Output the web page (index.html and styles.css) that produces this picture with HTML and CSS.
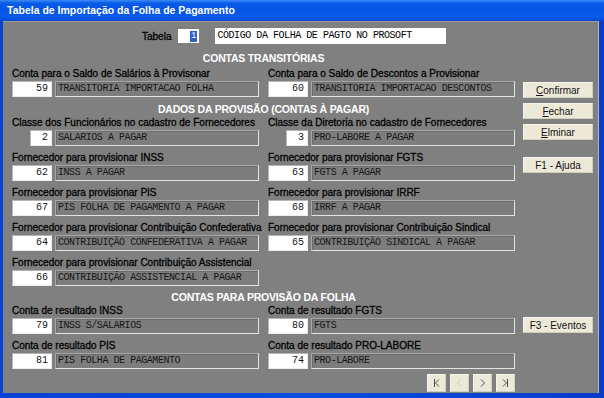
FILE: index.html
```html
<!DOCTYPE html>
<html>
<head>
  <title>Tabela de Importação da Folha de Pagamento</title>
  <link rel="stylesheet" href="styles.css">
</head>
<body>
  <div class="window">
    <div class="titlebar">Tabela de Importação da Folha de Pagamento</div>
    <div class="frame">
      <div class="client">
        <div class="form">
          <div class="tabela-row">
            <label class="tabela-label">Tabela</label>
            <span class="code-box"><span class="selected">1</span></span>
            <span class="desc-box">CÓDIGO DA FOLHA DE PAGTO NO PROSOFT</span>
          </div>

          <div class="section-title first">CONTAS TRANSITÓRIAS</div>
          <div class="grid grid-first">
            <div class="group">
              <label>Conta para o Saldo de Salários à Provisonar</label>
              <div class="field-row">
                <span class="num">59</span>
                <span class="text">TRANSITORIA IMPORTACAO FOLHA</span>
              </div>
            </div>
            <div class="group">
              <label>Conta para o Saldo de Descontos a Provisionar</label>
              <div class="field-row">
                <span class="num">60</span>
                <span class="text">TRANSITORIA IMPORTACAO DESCONTOS</span>
              </div>
            </div>
          </div>

          <div class="section-title">DADOS DA PROVISÃO (CONTAS À PAGAR)</div>
          <div class="grid">
            <div class="group">
              <label>Classe dos Funcionários no cadastro de Fornecedores</label>
              <div class="field-row">
                <span class="num short">2</span>
                <span class="text">SALARIOS A PAGAR</span>
              </div>
            </div>
            <div class="group">
              <label>Classe da Diretoria no cadastro de Fornecedores</label>
              <div class="field-row">
                <span class="num short">3</span>
                <span class="text">PRO-LABORE A PAGAR</span>
              </div>
            </div>
            <div class="group">
              <label>Fornecedor para provisionar INSS</label>
              <div class="field-row">
                <span class="num">62</span>
                <span class="text">INSS A PAGAR</span>
              </div>
            </div>
            <div class="group">
              <label>Fornecedor para provisionar FGTS</label>
              <div class="field-row">
                <span class="num">63</span>
                <span class="text">FGTS A PAGAR</span>
              </div>
            </div>
            <div class="group">
              <label>Fornecedor para provisionar PIS</label>
              <div class="field-row">
                <span class="num">67</span>
                <span class="text">PIS FOLHA DE PAGAMENTO A PAGAR</span>
              </div>
            </div>
            <div class="group">
              <label>Fornecedor para provisionar IRRF</label>
              <div class="field-row">
                <span class="num">68</span>
                <span class="text">IRRF A PAGAR</span>
              </div>
            </div>
            <div class="group">
              <label>Fornecedor para provisionar Contribuição Confederativa</label>
              <div class="field-row">
                <span class="num">64</span>
                <span class="text">CONTRIBUIÇÃO CONFEDERATIVA A PAGAR</span>
              </div>
            </div>
            <div class="group">
              <label>Fornecedor para provisionar Contribuição Sindical</label>
              <div class="field-row">
                <span class="num">65</span>
                <span class="text">CONTRIBUIÇÃO SINDICAL A PAGAR</span>
              </div>
            </div>
            <div class="group">
              <label>Fornecedor para provisionar Contribuição Assistencial</label>
              <div class="field-row">
                <span class="num">66</span>
                <span class="text">CONTRIBUIÇÃO ASSISTENCIAL A PAGAR</span>
              </div>
            </div>
          </div>

          <div class="section-title last">CONTAS PARA PROVISÃO DA FOLHA</div>
          <div class="grid">
            <div class="group">
              <label>Conta de resultado INSS</label>
              <div class="field-row">
                <span class="num">79</span>
                <span class="text">INSS S/SALARIOS</span>
              </div>
            </div>
            <div class="group">
              <label>Conta de resultado FGTS</label>
              <div class="field-row">
                <span class="num">80</span>
                <span class="text">FGTS</span>
              </div>
            </div>
            <div class="group">
              <label>Conta de resultado PIS</label>
              <div class="field-row">
                <span class="num">81</span>
                <span class="text">PIS FOLHA DE PAGAMENTO</span>
              </div>
            </div>
            <div class="group">
              <label>Conta de resultado PRO-LABORE</label>
              <div class="field-row">
                <span class="num">74</span>
                <span class="text">PRO-LABORE</span>
              </div>
            </div>
          </div>

          <div class="nav">
            <button class="nav-btn">
              <svg width="7" height="8" viewBox="0 0 7 8"><path d="M1.5 0v8M6 .5 2.5 4 6 7.5" fill="none" stroke="#4a4a4a"/></svg>
            </button>
            <button class="nav-btn">
              <svg width="7" height="8" viewBox="0 0 7 8"><path d="M5 .5 1.5 4 5 7.5" fill="none" stroke="#cfccbc"/></svg>
            </button>
            <button class="nav-btn">
              <svg width="7" height="8" viewBox="0 0 7 8"><path d="M2 .5 5.5 4 2 7.5" fill="none" stroke="#4a4a4a"/></svg>
            </button>
            <button class="nav-btn">
              <svg width="7" height="8" viewBox="0 0 7 8"><path d="M1 .5 4.5 4 1 7.5M5.5 0v8" fill="none" stroke="#4a4a4a"/></svg>
            </button>
          </div>
        </div>

        <div class="side">
          <button class="btn btn-confirmar"><u>C</u>onfirmar</button>
          <button class="btn btn-fechar"><u>F</u>echar</button>
          <button class="btn btn-eliminar"><u>E</u>lminar</button>
          <button class="btn btn-ajuda">F1 - Ajuda</button>
          <button class="btn btn-eventos">F3 - Eventos</button>
        </div>
      </div>
    </div>
  </div>
</body>
</html>
```

FILE: styles.css
```css
body {
  margin: 0;
  font-family: "Liberation Sans", Arial, sans-serif;
}

.window {
  width: 604px;
  height: 398px;
  display: flex;
  flex-direction: column;
  background: #0a46d6;
}

.titlebar {
  flex: none;
  height: 21px;
  line-height: 21px;
  padding-left: 7px;
  color: #fff;
  font-size: 10.5px;
  font-weight: bold;
  background: linear-gradient(#3d8cf6 0, #0a5ce8 3px, #0553e6 10px, #0a5be8 17px, #0447d2 21px);
}

.frame {
  flex: 1;
  display: flex;
  padding: 0 5px 5px 3px;
  background: linear-gradient(to right, #0a42d2, #0a4ee0 50%, #0a3cc8);
}

.client {
  flex: 1;
  display: flex;
  padding: 6px 0 0 9px;
  background: #808080;
  border-top: 1px solid #9c9c9c;
  border-right: 1px solid #b8b8b8;
}

.form {
  width: 503px;
}

/* tabela header row */
.tabela-row {
  display: flex;
  align-items: center;
  height: 16px;
  padding-left: 130px;
}

.tabela-label {
  font-size: 10px;
  margin-right: 7px;
  -webkit-text-stroke: 0.3px #000;
}

.code-box {
  width: 21px;
  height: 14px;
  background: #fff;
  display: flex;
  justify-content: flex-end;
  align-items: center;
  padding-right: 2px;
  box-sizing: border-box;
}

.selected {
  background: #2b5fc6;
  color: #fff;
  font-family: "Liberation Mono", monospace;
  font-size: 9px;
  line-height: 11px;
  padding: 0 1px;
}

.desc-box {
  margin-left: 16px;
  width: 231px;
  height: 16px;
  line-height: 16px;
  background: #fff;
  padding-left: 2px;
  box-sizing: border-box;
  font-family: "Liberation Mono", monospace;
  font-size: 10px;
  letter-spacing: -0.45px;
  color: #000;
}

.section-title {
  text-align: center;
  color: #fff;
  font-weight: bold;
  font-size: 10.5px;
  line-height: 13px;
  letter-spacing: -0.2px;
  margin-top: 6px;
}

.section-title.first {
  margin-top: 8px;
}

.section-title.last {
  margin-top: 5px;
}

.grid {
  display: grid;
  grid-template-columns: 247px 247px;
  column-gap: 9px;
  row-gap: 5px;
}

.grid-first {
  margin-top: 2px;
}

.group label {
  display: block;
  font-size: 10px;
  line-height: 13px;
  white-space: nowrap;
  color: #000;
  -webkit-text-stroke: 0.3px #000;
}

.field-row {
  display: flex;
  justify-content: flex-end;
  gap: 3px;
  margin-top: 1px;
  height: 16px;
}

.num,
.text {
  box-sizing: border-box;
  height: 16px;
  line-height: 14px;
  font-family: "Liberation Mono", monospace;
  font-size: 10px;
  letter-spacing: -0.45px;
  color: #151515;
  white-space: nowrap;
}

.num {
  width: 40px;
  background: #fff;
  text-align: right;
  padding-right: 3px;
  border: 1px solid;
  border-color: #b4b4b4 #ededed #ededed #b4b4b4;
  letter-spacing: 0;
}

.num.short {
  width: 22px;
}

.text {
  width: 204px;
  padding-left: 2px;
  background: #7d7d7d;
  border: 1px solid;
  border-color: #a8a8a8 #e4e4e4 #e4e4e4 #a8a8a8;
  box-shadow: inset 1px 1px 0 #6c6c6c;
}

.nav {
  display: flex;
  justify-content: flex-end;
  gap: 4px;
  margin-top: 5px;
}

.nav-btn {
  width: 19px;
  height: 18px;
  padding: 0;
  display: flex;
  align-items: center;
  justify-content: center;
  background: #ece9d8;
  border: 1px solid;
  border-color: #f6f5ef #d3cfbd #d3cfbd #f6f5ef;
}

.side {
  display: flex;
  flex-direction: column;
  margin-left: 8px;
  width: 70px;
}

.btn {
  height: 16px;
  padding: 0;
  font-family: "Liberation Sans", Arial, sans-serif;
  font-size: 10px;
  color: #111;
  background: #ece9d8;
  border: 1px solid;
  border-color: #f6f5ef #d3cfbd #d3cfbd #f6f5ef;
}

.btn-confirmar {
  margin-top: 54px;
}

.btn-fechar,
.btn-eliminar {
  margin-top: 5px;
}

.btn-ajuda {
  margin-top: 17px;
}

.btn-eventos {
  margin-top: 144px;
}
```
